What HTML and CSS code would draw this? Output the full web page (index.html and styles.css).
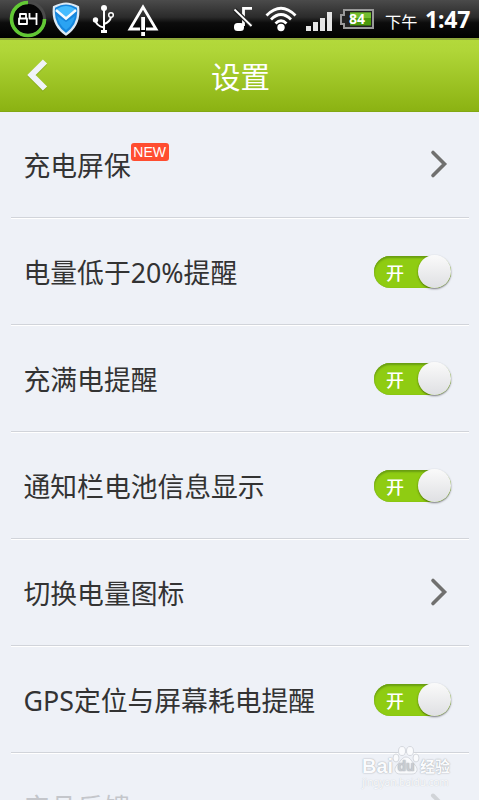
FILE: index.html
```
<!DOCTYPE html>
<html lang="zh-CN">
<head>
  <meta charset="UTF-8">
  <meta name="viewport" content="width=device-width, initial-scale=1.0">
  <title>设置</title>
  <link rel="stylesheet" href="styles.css">
</head>
<body>
  <div class="status-bar">
    <div class="status-left">
      <svg class="ring" width="38" height="38" viewBox="0 0 38 38">
        <circle cx="19" cy="19" r="16.5" fill="#050505" stroke="#4a4a4a" stroke-width="3"/>
        <path d="M19 2.500A16.500 16.500 0 1 0 35.500 19" fill="none" stroke="#62c934" stroke-width="3.600"/>
        <path d="M11 14h6v4.500h-6zM10 18.500h8v5.500H10zM20.500 13v5.500h7.500M27.500 13v12" fill="none" stroke="#fff" stroke-width="1.800" stroke-linejoin="round"/>
      </svg>
      <svg class="shield" width="28" height="34" viewBox="0 0 28 34">
        <path d="M14 1.500c4 0 8 1.500 12 3.500 1.500 12-2.500 21-12 27.500C4.500 26 .5 17 2 5c4-2 8-3.500 12-3.500z" fill="#1686dd" stroke="#dceaf5" stroke-width="2.200"/>
        <path d="M5 7c6-4 12-4 18 0l-9 8z" fill="#45bcff"/>
        <path d="M5 14l9 6 9-6q-2 9-9 14-7-5-9-14z" fill="#2ba3f2"/>
        <path d="M4 8l10 8.500L24 8" fill="none" stroke="#f3faff" stroke-width="2.600"/>
      </svg>
      <svg class="usb" width="23" height="30" viewBox="0 0 23 30">
        <path d="M12 4v23M12 23.500Q4 22 3.500 16M12 20Q18 18 19 13" fill="none" stroke="#fff" stroke-width="2"/>
        <circle cx="12" cy="4" r="3" fill="#fff"/>
        <circle cx="3.500" cy="16" r="2.700" fill="#fff"/>
        <circle cx="19" cy="11" r="2.300" fill="#222" stroke="#fff" stroke-width="1.500"/>
        <path d="M9 26h6v3H9z" fill="#fff"/>
      </svg>
      <svg class="warn" width="32" height="32" viewBox="0 0 32 32">
        <path d="M13 25H3L16 3l13 22H19" fill="none" stroke="#fff" stroke-width="2.800"/>
        <path d="M14.200 13h3.800v13h-3.800zM14.200 28h3.800v4h-3.800z" fill="#fff"/>
      </svg>
    </div>
    <div class="status-right">
      <svg class="mute" width="20" height="26" viewBox="0 0 20 26">
        <path d="M10.500 20V2.400H19" fill="none" stroke="#fff" stroke-width="2.800"/>
        <rect x="1" y="17" width="10" height="8" rx="3.500" fill="#fff"/>
        <path d="M1.500 3.500L18.500 20" stroke="#222" stroke-width="4.500"/>
        <path d="M1.500 3.500L18.500 20" stroke="#fff" stroke-width="1.800"/>
      </svg>
      <svg class="wifi" width="32" height="26" viewBox="0 0 32 26">
        <path d="M1.500 9.500Q16-5 30.500 9.500M6 13.500Q16 3.500 26 13.500M10.500 17.500Q16 12 21.500 17.500" fill="none" stroke="#fff" stroke-width="2.800"/>
        <circle cx="16" cy="21.500" r="3.700" fill="#fff"/>
      </svg>
      <svg class="signal" width="27" height="20" viewBox="0 0 27 20">
        <path d="M0 14h5v5H0zM7 10h5v9H7zM14 6h5v13h-5zM21 0h5v19h-5z" fill="#e4e4e4"/>
      </svg>
      <div class="battery">
        <svg width="34" height="20" viewBox="0 0 34 20">
          <path d="M4 1h29v18H4v-4H1V6h3z" fill="#222" stroke="#999" stroke-width="2"/>
          <path d="M10 3.500h21v13H10z" fill="#4b9a0b"/>
          <path d="M10 3.500h21V9H10z" fill="#73bd31"/>
        </svg>
        <span>84</span>
      </div>
      <span class="ampm">下午</span>
      <span class="clock">1:47</span>
    </div>
  </div>

  <div class="header">
    <svg class="back" width="22" height="34" viewBox="0 0 22 34">
      <path d="M18 3.500L4.500 17 18 30.500" fill="none" stroke="#6f931a" stroke-opacity=".35" stroke-width="6.500" transform="translate(0 1)"/>
      <path d="M18 3.500L4.500 17 18 30.500" fill="none" stroke="#f0f3f8" stroke-width="6"/>
    </svg>
    <h1>设置</h1>
  </div>

  <div class="list">
    <div class="row">
      <span class="label">充电屏保</span><span class="new">NEW</span>
      <svg class="arrow" width="18" height="30" viewBox="0 0 18 30"><path d="M3 3.500l11.500 11.500L3 26.500"/></svg>
    </div>
    <div class="row">
      <span class="label">电量低于20%提醒</span>
      <div class="switch"><span>开</span><i></i></div>
    </div>
    <div class="row">
      <span class="label">充满电提醒</span>
      <div class="switch"><span>开</span><i></i></div>
    </div>
    <div class="row">
      <span class="label">通知栏电池信息显示</span>
      <div class="switch"><span>开</span><i></i></div>
    </div>
    <div class="row">
      <span class="label">切换电量图标</span>
      <svg class="arrow" width="18" height="30" viewBox="0 0 18 30"><path d="M3 3.500l11.500 11.500L3 26.500"/></svg>
    </div>
    <div class="row">
      <span class="label">GPS定位与屏幕耗电提醒</span>
      <div class="switch"><span>开</span><i></i></div>
    </div>
    <div class="row faded">
      <span class="label">产品反馈</span>
      <svg class="arrow" width="18" height="30" viewBox="0 0 18 30"><path d="M3 3.500l11.500 11.500L3 26.500"/></svg>
    </div>
  </div>

  <div class="watermark">
    <div class="brand">
      <span>Bai</span>
      <svg width="28" height="32" viewBox="0 0 28 32">
        <g fill="#fafbfd" stroke="#d5d8de">
          <ellipse cx="4" cy="13" rx="3" ry="4"/>
          <ellipse cx="10" cy="6" rx="3.500" ry="4.500"/>
          <ellipse cx="18" cy="6" rx="3.500" ry="4.500"/>
          <ellipse cx="24" cy="13" rx="3" ry="4"/>
          <path d="M14 12c4 0 6 5 9 8 4 4 2 9-3 9H8c-5 0-7-5-3-9 3-3 5-8 9-8z"/>
        </g>
        <text x="14" y="26" text-anchor="middle">du</text>
      </svg>
      <span class="cn">经验</span>
    </div>
    <div class="site">jingyan.baidu.com</div>
  </div>
</body>
</html>
```
FILE: styles.css
```
* {
  box-sizing: border-box;
}
body {
  margin: 0;
  height: 800px;
  position: relative;
  overflow: hidden;
  background: #eef1f7;
  color: #333;
  font-family: "Noto Sans", "Noto Sans CJK SC", sans-serif;
}
svg {
  display: block;
  flex: none;
}

/* status bar */
.status-bar {
  height: 38px;
  display: flex;
  justify-content: space-between;
  padding: 0 8px 0 9px;
  background: linear-gradient(#4b4b4b 0, #2b2b2b 45%, #0c0c0c 60%, #000 100%);
  color: #fff;
}
.status-left, .status-right {
  display: flex;
  align-items: center;
}
.shield {
  margin-left: 5px;
}
.usb {
  margin: -1px 0 0 12px;
}
.warn {
  margin: 1px 0 0 12px;
}
.mute {
  margin-top: -1px;
}
.wifi {
  margin: -1px 0 0 12px;
}
.signal {
  margin: 5px 0 0 9px;
}
.battery {
  position: relative;
  margin: 0 0 0 7px;
}
.battery span {
  position: absolute;
  left: 9px;
  top: 1px;
  font-size: 14px;
  line-height: 18px;
  font-weight: bold;
}
.ampm {
  width: 33px;
  margin: 4px 0 0 11px;
  font-family: "Noto Sans CJK SC", sans-serif;
  font-size: 16.200px;
  font-weight: 400;
  line-height: 24px;
}
.clock {
  width: 46px;
  margin-left: 7px;
  font-size: 23px;
  line-height: 38px;
  font-weight: bold;
  letter-spacing: -0.200px;
}

/* title */
.header {
  height: 74px;
  display: flex;
  align-items: center;
  justify-content: center;
  position: relative;
  background: linear-gradient(#b3d93b 0, #b0d638 15%, #8db414 96%, #8bb213 100%);
  border-top: 2px solid #8fa93b;
  border-bottom: 1px solid #82a813;
}
.header h1 {
  margin: 2px 0 0 2px;
  color: #fff;
  font-size: 29.500px;
  line-height: 40px;
  font-weight: 400;
}
.back {
  position: absolute;
  left: 27px;
  top: 18px;
}

/* settings */
.list {
  height: 688px;
  overflow: hidden;
}
.row {
  height: 107px;
  margin: 0 10px 0 11px;
  padding: 0 18px 0 12.500px;
  display: flex;
  align-items: center;
  border-bottom: 1px solid #fff;
  box-shadow: inset 0 -1px #d1d4da;
}
.label {
  margin-top: 2px;
  font-size: 26.800px;
  line-height: 40px;
  font-weight: 400;
}
.new {
  width: 38px;
  height: 18px;
  margin-top: -27px;
  border-radius: 3px;
  background: #ff4d30;
  color: #fff;
  text-align: center;
  font: 14px/19px "Liberation Sans", sans-serif;
}
.arrow {
  margin: -2px 3px 0 auto;
  fill: none;
  stroke: #70706f;
  stroke-width: 3.600px;
  stroke-linecap: round;
}
.switch {
  width: 77px;
  height: 32px;
  margin: -1px 0 0 auto;
  position: relative;
  border-radius: 16px;
  background: #8fcc12;
  box-shadow: inset 0 2px 2px #699d12, inset 0 0 1px #699d12;
}
.switch span {
  display: block;
  padding-left: 12px;
  color: #fff;
  font-size: 18px;
  line-height: 34px;
  font-weight: 500;
}
.switch i {
  position: absolute;
  right: 0;
  top: -1px;
  width: 33px;
  height: 33px;
  border-radius: 50%;
  background: linear-gradient(#fafafa, #dfe0e3);
  box-shadow: 0 1px 2px rgba(0, 0, 0, 0.5);
}
.faded .label, .faded .arrow {
  opacity: 0.22;
}
.faded .arrow {
  margin-top: 0;
  stroke-width: 4px;
}

/* watermark */
.watermark {
  position: absolute;
  left: 362px;
  top: 745px;
  width: 94px;
  color: #fafbfd;
  text-shadow: 0 0 1px #a9adb3, 0 0 2px #b9bdc3;
}
.brand {
  display: flex;
  align-items: center;
  height: 32px;
  font: bold 20px/24px "Liberation Sans", sans-serif;
}
.brand span {
  margin-top: 10px;
  width: 30px;
}
.brand .cn {
  font: bold 15px/24px "Noto Sans CJK SC", sans-serif;
}
.brand text {
  font: bold 14px "Liberation Sans", sans-serif;
  fill: #c9ccd2;
}
.site {
  font-size: 10px;
  line-height: 10px;
  text-shadow: 0 0 1px #b9bdc3;
}
```
